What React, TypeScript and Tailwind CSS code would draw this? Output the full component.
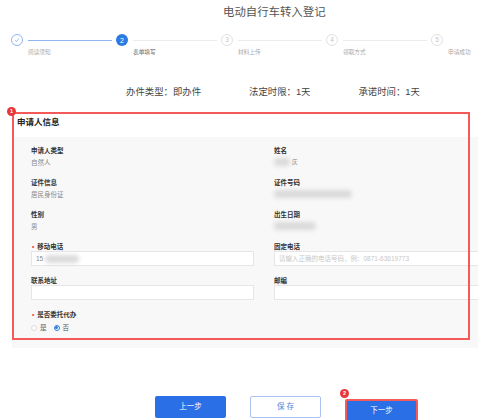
import React from "react";

type Step = { n: number; label: string; state: "done" | "active" | "todo" };

const steps: Step[] = [
  { n: 1, label: "阅读须知", state: "done" },
  { n: 2, label: "表单填写", state: "active" },
  { n: 3, label: "材料上传", state: "todo" },
  { n: 4, label: "领取方式", state: "todo" },
  { n: 5, label: "申请成功", state: "todo" },
];

const StepCircle = ({ step }: { step: Step }) => {
  if (step.state === "done") {
    return (
      <div className="flex h-[12px] w-[12px] shrink-0 items-center justify-center rounded-full border border-[#8fb6f0] bg-white">
        <svg width="6" height="6" viewBox="0 0 10 10" fill="none">
          <path d="M2 5.5 L4.2 7.5 L8 2.8" stroke="#6f9fe8" strokeWidth="1.2" />
        </svg>
      </div>
    );
  }
  if (step.state === "active") {
    return (
      <div className="flex h-[12px] w-[12px] shrink-0 items-center justify-center rounded-full bg-[#2c7be5] text-[7px] leading-none text-white">
        {step.n}
      </div>
    );
  }
  return (
    <div className="flex h-[12px] w-[12px] shrink-0 items-center justify-center rounded-full border border-[#e2e2e2] bg-white text-[6.5px] leading-none text-[#c4c4c4]">
      {step.n}
    </div>
  );
};

// redacted values in the screenshot
const Blur = ({ w }: { w: string }) => (
  <span className={`inline-block h-[8px] ${w} rounded-sm bg-[#dadada] align-middle blur-[2px]`} />
);

const Field = ({
  label,
  children,
  required,
}: {
  label: string;
  children: React.ReactNode;
  required?: boolean;
}) => (
  <div>
    <div className="flex items-center text-[6.5px] font-bold leading-[9px] text-[#333]">
      {required && <span className="mr-[3px] ml-px text-[#f04848]">•</span>}
      {label}
    </div>
    {children}
  </div>
);

const Value = ({ children }: { children: React.ReactNode }) => (
  <div className="mt-[3px] flex h-[9px] items-center text-[6.5px] leading-[9px] text-[#888]">
    {children}
  </div>
);

const Input = ({ children }: { children?: React.ReactNode }) => (
  <div className="flex h-[15px] items-center border border-[#e6e6e6] bg-white pl-[4px] text-[6.5px] text-[#999]">
    {children}
  </div>
);

export default function App() {
  return (
    <div className="relative h-[420px] w-[478px] overflow-hidden bg-white font-['Liberation_Sans','Noto_Sans_CJK_SC',sans-serif]">
      {/* Title */}
      <div className="ml-[223px] pt-[5px] text-[11.4px] leading-[14px] text-[#555]">
        电动自行车转入登记
      </div>

      {/* Steps */}
      <div className="mt-[15px] flex pl-[11px]">
        {steps.map((s, i) => (
          <div key={s.n} className="w-[105px] shrink-0">
            <div className="flex h-[12px] items-center">
              <StepCircle step={s} />
              {i < steps.length - 1 && (
                <div
                  className={
                    i === 0
                      ? "ml-[5px] h-px w-[84px] bg-[#8fb6f0]"
                      : "ml-[5px] h-px w-[84px] bg-[#ececec]"
                  }
                />
              )}
            </div>
            <div
              className={
                s.state === "active"
                  ? "ml-[17px] mt-[2px] whitespace-nowrap text-[5.7px] leading-[8px] text-[#666]"
                  : "ml-[17px] mt-[2px] whitespace-nowrap text-[5.7px] leading-[8px] text-[#aaa]"
              }
            >
              {s.label}
            </div>
          </div>
        ))}
      </div>

      {/* Info row */}
      <div className="mt-[30px] flex text-[9.4px] leading-[12px] text-[#444]">
        <span className="ml-[126px]">办件类型：即办件</span>
        <span className="ml-[48px]">法定时限：1天</span>
        <span className="ml-[48px]">承诺时间：1天</span>
      </div>

      {/* Applicant info */}
      <div className="relative ml-[12px] mt-[14px]">
        <div className="h-[25px] pl-[5px] pt-[5px] text-[8.5px] font-bold leading-[11px] text-[#222]">
          申请人信息
        </div>
        <div className="w-[480px] bg-[#f8f8f8] pb-[16px] pl-[19px] pt-[8.5px]">
          <div className="grid grid-cols-[223px_1fr] gap-x-[20px]">
            <Field label="申请人类型">
              <Value>自然人</Value>
            </Field>
            <Field label="姓名">
              <Value>
                <Blur w="w-[16px]" />
                <span className="ml-[2px] text-[5.5px]">庆</span>
              </Value>
            </Field>
          </div>
          <div className="mt-[11px] grid grid-cols-[223px_1fr] gap-x-[20px]">
            <Field label="证件信息">
              <Value>居民身份证</Value>
            </Field>
            <Field label="证件号码">
              <Value>
                <Blur w="w-[78px]" />
              </Value>
            </Field>
          </div>
          <div className="mt-[11px] grid grid-cols-[223px_1fr] gap-x-[20px]">
            <Field label="性别">
              <Value>男</Value>
            </Field>
            <Field label="出生日期">
              <Value>
                <Blur w="w-[42px]" />
              </Value>
            </Field>
          </div>
          <div className="mt-[11px] grid grid-cols-[223px_1fr] gap-x-[20px]">
            <Field label="移动电话" required>
              <div className="mt-[0.5px]">
                <Input>
                  <span className="text-[#888]">15</span>
                  <span className="ml-[2px]">
                    <Blur w="w-[34px]" />
                  </span>
                </Input>
              </div>
            </Field>
            <Field label="固定电话">
              <div className="mt-[0.5px]">
                <Input>
                  <span className="text-[#c8c8c8]">请输入正确的电话号码，例：0871-63619773</span>
                </Input>
              </div>
            </Field>
          </div>
          <div className="mt-[9.5px] grid grid-cols-[223px_1fr] gap-x-[20px]">
            <Field label="联系地址">
              <Input />
            </Field>
            <Field label="邮编">
              <Input />
            </Field>
          </div>
          <div className="mt-[10.5px]">
            <Field label="是否委托代办" required>
              <div className="mt-[4px] flex h-[9px] items-center text-[6.5px] text-[#555]">
                <span className="h-[6px] w-[6px] rounded-full border border-[#dcdcdc] bg-white" />
                <span className="ml-[3px]">是</span>
                <span className="ml-[7px] flex h-[6px] w-[6px] items-center justify-center rounded-full border border-[#2c7be5] bg-white">
                  <span className="h-[3px] w-[3px] rounded-full bg-[#2c7be5]" />
                </span>
                <span className="ml-[3px]">否</span>
              </div>
            </Field>
          </div>
        </div>

        {/* annotation overlay */}
        <div className="pointer-events-none absolute left-0 top-0 h-[228px] w-[458px] border-2 border-[#f45a5a]" />
        <div className="absolute left-[-5px] top-[-5px] flex h-[9px] w-[9px] items-center justify-center rounded-full bg-[#e8363a] text-[5.5px] font-bold leading-none text-white">
          1
        </div>
      </div>

      {/* Buttons */}
      <div className="ml-[155px] mt-[48px] flex gap-[24px]">
        <button className="h-[22px] w-[71px] rounded-[2px] bg-[#2b6fe6] text-[7.5px] text-white">
          上一步
        </button>
        <button className="h-[22px] w-[71px] rounded-[2px] border border-[#a9c2f0] bg-white text-[7.5px] text-[#5a7fcf]">
          保 存
        </button>
        <div className="relative">
          <button className="h-[23px] w-[73px] rounded-[2px] border-2 border-[#f45a5a] bg-[#2b6fe6] text-[7.5px] text-white">
            下一步
          </button>
          <div className="absolute left-[-5px] top-[-7px] flex h-[9px] w-[9px] items-center justify-center rounded-full bg-[#e8363a] text-[5.5px] font-bold leading-none text-white">
            2
          </div>
        </div>
      </div>
    </div>
  );
}
